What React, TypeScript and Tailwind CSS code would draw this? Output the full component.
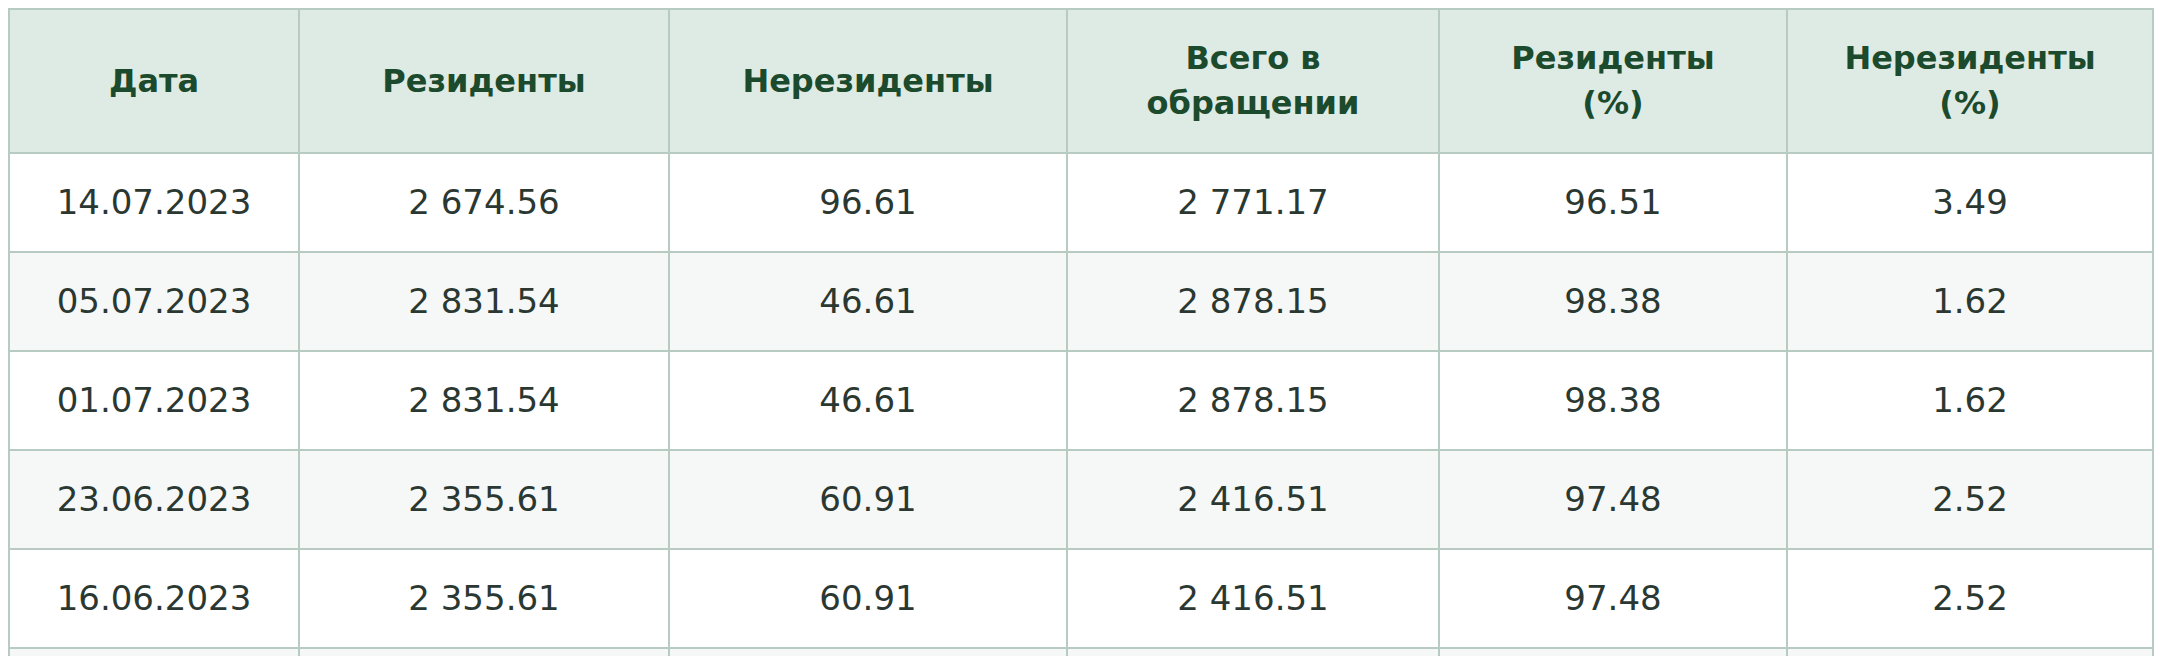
type Row = {
  date: string
  residents: string
  nonResidents: string
  total: string
  residentsPct: string
  nonResidentsPct: string
}

const rows: Row[] = [
  { date: '14.07.2023', residents: '2 674.56', nonResidents: '96.61', total: '2 771.17', residentsPct: '96.51', nonResidentsPct: '3.49' },
  { date: '05.07.2023', residents: '2 831.54', nonResidents: '46.61', total: '2 878.15', residentsPct: '98.38', nonResidentsPct: '1.62' },
  { date: '01.07.2023', residents: '2 831.54', nonResidents: '46.61', total: '2 878.15', residentsPct: '98.38', nonResidentsPct: '1.62' },
  { date: '23.06.2023', residents: '2 355.61', nonResidents: '60.91', total: '2 416.51', residentsPct: '97.48', nonResidentsPct: '2.52' },
  { date: '16.06.2023', residents: '2 355.61', nonResidents: '60.91', total: '2 416.51', residentsPct: '97.48', nonResidentsPct: '2.52' },
]

const cell = 'border-2 border-[#b8cbc3]'

export default function App() {
  return (
    <div className="h-[656px] overflow-hidden bg-white p-[8px] font-['DejaVu_Sans',sans-serif]">
      <table className="w-[2146px] table-fixed border-collapse border-2 border-[#b8cbc3]">
        <colgroup>
          <col className="w-[290px]" />
          <col className="w-[370px]" />
          <col className="w-[398px]" />
          <col className="w-[372px]" />
          <col className="w-[348px]" />
          <col className="w-[366px]" />
        </colgroup>
        <thead>
          <tr className="h-[144px] bg-[#deebe4] text-[#1b4a2d] text-[32px] font-bold leading-[45px]">
            <th className={cell}>Дата</th>
            <th className={cell}>Резиденты</th>
            <th className={cell}>Нерезиденты</th>
            <th className={cell}>Всего в<br />обращении</th>
            <th className={cell}>Резиденты<br />(%)</th>
            <th className={cell}>Нерезиденты<br />(%)</th>
          </tr>
        </thead>
        <tbody className="text-[34px] text-[#2b3832]">
          {rows.map((r, i) => (
            <tr key={r.date} className={`h-[99px] text-center ${i % 2 === 1 ? 'bg-[#f6f8f7]' : 'bg-white'}`}>
              <td className={cell}>{r.date}</td>
              <td className={cell}>{r.residents}</td>
              <td className={cell}>{r.nonResidents}</td>
              <td className={cell}>{r.total}</td>
              <td className={cell}>{r.residentsPct}</td>
              <td className={cell}>{r.nonResidentsPct}</td>
            </tr>
          ))}
          {/* next row is cut off by the bottom of the window */}
          <tr className="h-[99px] bg-[#f6f8f7]">
            <td className={cell} />
            <td className={cell} />
            <td className={cell} />
            <td className={cell} />
            <td className={cell} />
            <td className={cell} />
          </tr>
        </tbody>
      </table>
    </div>
  )
}
